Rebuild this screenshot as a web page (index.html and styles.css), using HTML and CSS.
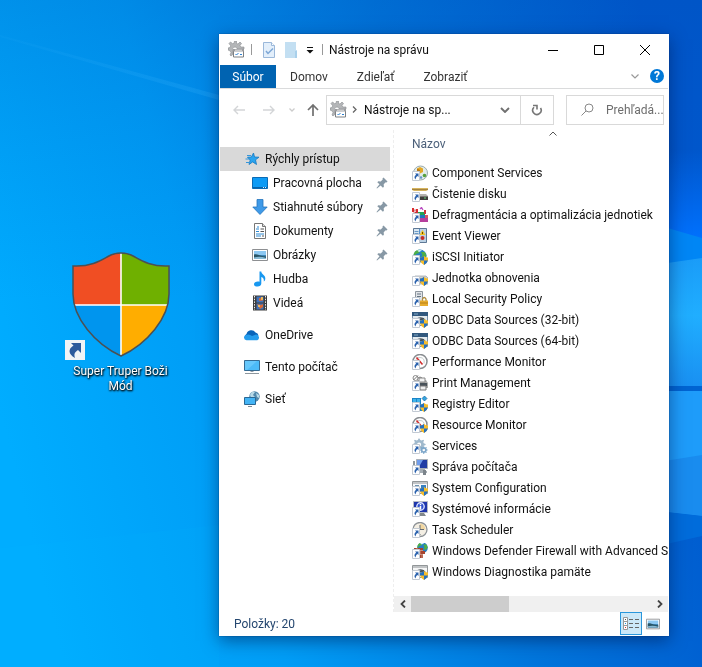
FILE: index.html
```html
<!DOCTYPE html>
<html lang="sk">
<head>
<meta charset="utf-8">
<meta name="viewport" content="width=device-width, initial-scale=1">
<title>Nástroje na správu</title>
<link rel="stylesheet" href="styles.css">
</head>
<body>
<svg class="defs" aria-hidden="true">
  <defs>
    <symbol id="sc" viewBox="0 0 16 16"><path d="M.5 6.500h7v9h-7z" fill="#fff" stroke="#c3cad3"/><path d="M3 8.500h3.500V12L5.400 11C4.200 12 3.700 13 3.700 14.500 1.800 13 2.200 11 4.200 9.800z" fill="#2a62ae"/></symbol>
    <symbol id="uac" viewBox="0 0 16 16"><path d="M8 8.500q2 0 4-1.500 2 1.500 4 1.500v3q-1 3-4 4.500-3-1.500-4-4.500z" fill="#f6bd2c"/><path d="M8 8.500q2 0 4-1.500v4.500H8zM12 11.500h4q-1 3-4 4.500z" fill="#2370c2"/></symbol>
    <symbol id="gear" viewBox="0 0 16 16"><path d="M8 .5l1 2 1.500.5 2.200-1 .9 1-1 2 .6 1.500 2.300.8v1.400l-2.300.8-.6 1.500 1 2-1 1-2-1-1.600.6-.8 2.200H6.800L6 13.600 4.500 13l-2.200 1-1-1 1-2-.6-1.500L0 8.700V7.300l1.700-.8.6-1.500-1-2 1-1 2.200 1L6 2.500l.8-2zM7.500 5.500a2.500 2.500 0 1 0 0 5 2.500 2.500 0 0 0 0-5z" fill-rule="evenodd"/></symbol>
    <symbol id="tools" viewBox="0 0 17 17"><path d="M6.500 0h2v2.500l1.500.5 2-2 1.500 1.500-1.500 2 .8 1.500H16v2H9V7.500a2.200 2.200 0 1 0-4 1.800v4L3 15l-1-1 1-2.500-1-1.700L0 9V7l2-.5.7-1.700L1 2.500 2.500 1l2.200 1.700L6 2.300z" fill="#b4b6b8" stroke="#8c8f92" stroke-width=".6"/><path d="M5.500 8.500h10v7.500h-10z" fill="#fff" stroke="#7d8083"/><path d="M5 8h11v2.500H5z" fill="#9b9da0"/><path d="M7 9.200h7" stroke="#e4e4e4"/><path d="M7.500 13l1 1 2-2M12 13.500h2" fill="none" stroke="#2b7fd0"/></symbol>
    <symbol id="star" viewBox="0 0 16 16"><path d="M9.500 2l1 4 4.500.2-3.500 2.600 1 4.700-3.800-2.600L5 13.500l1.200-4.500L3.500 6.200l3.900-.2z" fill="#2aa4ef" stroke="#1477c0" stroke-width=".8"/><path d="M3 4.500h4M1.500 8h4M2 11.500h4" stroke="#3596da"/></symbol>
    <symbol id="desk" viewBox="0 0 16 16"><path d="M.5 2.500h15v11H.5z" fill="#0d9bf5" stroke="#0a6bb5"/><path d="M1 12h14v1H1z" fill="#0863a8"/><path d="M11 12.500h1M13 12.500h1" stroke="#d8efff"/></symbol>
    <symbol id="down" viewBox="0 0 16 16"><path d="M5 .5h6V8h4.200L8 15.500.8 8H5z" fill="#3f9ae8" stroke="#2374bd" stroke-width=".8"/></symbol>
    <symbol id="doc" viewBox="0 0 16 16"><path d="M2.500.5h8l3 3v12h-11z" fill="#fff" stroke="#777"/><path d="M10.500.5v3h3" fill="#ddd" stroke="#777"/><path d="M4 6h3M5 4h2M4 8.500h3M4 11h8M4 13h5" stroke="#2e8ad2"/><path d="M8.500 6h3.500M8.500 8.500H12M10 13h2" stroke="#555"/></symbol>
    <symbol id="pic" viewBox="0 0 16 16"><path d="M.5 2.500h15v11H.5z" fill="#fff" stroke="#8d8f92"/><path d="M2 4h12v4H2z" fill="#8cc8f2"/><path d="M2 8h12v4H2z" fill="#3e86b8"/><path d="M2 7.500c4-1 4 1.500 12 2V12H2z" fill="#285567"/><path d="M2 10.500q6-1.500 12 .5v1H2z" fill="#87bad5"/></symbol>
    <symbol id="music" viewBox="0 0 16 16"><path d="M7.500.5h1.800c0 3 4 3.500 4 7 0 1.500-.7 2.500-1.500 3 .5-2.500-.8-4-2.500-4.500v6.500c0 1.700-1.600 3-3.800 3S2 14.700 2 13.200s1.800-2.700 3.800-2.700c.7 0 1.200.1 1.700.3z" fill="#1898f0"/></symbol>
    <symbol id="video" viewBox="0 0 16 16"><path d="M1 .5h14v15H1z" fill="#3d3d3d"/><path d="M2.500 1v14M13.500 1v14" stroke="#eee" stroke-dasharray="1.500 1.200"/><path d="M4.500 1.500h7v6h-7zM4.500 8.500h7v6h-7z" fill="#4073ba"/><path d="M7 3l4 .5v2L7 6zM5 9l4 1 2-1v3l-3 2z" fill="#d96935"/><path d="M9 2h2v3H9zM6 10h2v2H6z" fill="#efb85a"/></symbol>
    <symbol id="cloud" viewBox="0 0 16 16"><path d="M2 12a3 3 0 0 1 .5-5 5 5 0 0 1 9-1.500 4 4 0 0 1 3 3L8 12z" fill="#0864b9"/><path d="M2.500 13.300A2.700 2.700 0 0 1 2 8q3-1.500 6 1l4-1.400a3 3 0 0 1 1.300 5.700z" fill="#249cec"/></symbol>
    <symbol id="pc" viewBox="0 0 16 16"><path d="M.5 1.500h15v10H.5z" fill="#4cbbf8" stroke="#356b93"/><path d="M1 2h12L3 11H1z" fill="#78d0ff" opacity=".6"/><path d="M6.500 12h3v1h-3z" fill="#929ca5"/><path d="M1 14.500h14" stroke="#8d979e"/></symbol>
    <symbol id="net" viewBox="0 0 16 16"><circle cx="10.500" cy="5.500" r="5.200" fill="#5289ac"/><path d="M7 2q2-2 4-1L9 4l2 2-1 3q-3-1-4-5zM12 2l3 2v3l-2-1z" fill="#b8d9e7"/><path d="M.5 6.500h11v7H.5z" fill="#43b4f5" stroke="#2a6895"/><path d="M4 15.500h4" stroke="#7e8c95"/></symbol>
    <symbol id="pin" viewBox="0 0 12 12"><path d="M7.500.5l4 4-1 1-.8-.2-2 2 .2 2.400-1 1-2.300-2.300L1 11.500l-.5-.5 3-3.700L1.300 5.200l1-1 2.400.2 2-2-.2-.9z" fill="#8798a5"/></symbol>

    <symbol id="f-com" viewBox="0 0 16 16"><circle cx="8.500" cy="8" r="7" fill="#e3ebea" stroke="#9aabab"/><path d="M5 3.500L8 2l3 1.500v3.500L8 8.500 5 7z" fill="#e3a826"/><path d="M5 3.500l3 1.500v3.500L5 7z" fill="#b9790f"/><circle cx="12.500" cy="10.500" r="1.800" fill="#56a03c"/><circle cx="9" cy="12.500" r="1.300" fill="#6297c9"/></symbol>
    <symbol id="f-clean" viewBox="0 0 16 16"><path d="M0 2h16v2l-2 1H2L0 4z" fill="#d6b45e"/><path d="M0 3.500h16" stroke="#a58440"/><path d="M4 8h10l2 2v4H4z" fill="#b4b2ae"/><path d="M7 10.500h9V14H7z" fill="#403e3b"/><path d="M12 12h2" stroke="#66d27a"/></symbol>
    <symbol id="f-defrag" viewBox="0 0 16 16"><path d="M0 1h2v4H0zM4 2h2v4H4z" fill="#db2e30"/><path d="M2 3h2v3H2z" fill="#fff" stroke="#c12a35" stroke-width=".6"/><path d="M8 2l1.500-1.500L11 3" fill="none" stroke="#b94ac0" stroke-width="1.300"/><path d="M6 5h7v3H6z" fill="#22a354"/><path d="M12 3h2v4h-2zM3 5h3v2H3z" fill="#ca3438"/><path d="M8 8h7v3H8z" fill="#1d76be"/><path d="M7 11h9v4H7z" fill="#b53f9b"/><path d="M13 8h3v3h-3z" fill="#d95363"/></symbol>
    <symbol id="f-event" viewBox="0 0 16 16"><path d="M1.500.5h13v14h-13z" fill="#5991c9" stroke="#5e7895"/><path d="M2 1h5v13H2z" fill="#d9e7f1"/><path d="M2.500 3.500h4M2.500 5.500h4" stroke="#6a9ac6"/><path d="M8 1h6v13H8z" fill="#bcd2e5"/><path d="M10.500 2l3 5h-6z" fill="#f4c524"/><path d="M10.500 4v2" stroke="#714c00"/><circle cx="10.500" cy="10" r="2" fill="#c63028"/></symbol>
    <symbol id="globe" viewBox="0 0 16 16"><circle cx="8" cy="7" r="6.500" fill="#267fc4"/><path d="M3 2.500Q6 0 8 1l-1 3-3 1-2 3Q1 5 3 2.500zM9 3l4 0 1.500 4-3 3-2-2 1-2z" fill="#4faf46"/><path d="M5 1.500q3-1 5 0L7 3z" fill="#d8f4ff"/></symbol>
    <symbol id="f-drive" viewBox="0 0 16 16"><path d="M1 8l2-2h11l2 2v6H1z" fill="#ccd0d4" stroke="#9ba0a4" stroke-width=".7"/><path d="M6 9h9v4H6z" fill="#7c838a"/></symbol>
    <symbol id="f-lock" viewBox="0 0 16 16"><path d="M3.500.5h7v14h-7z" fill="#e1e4e7" stroke="#8d959d"/><path d="M5 3h4M5 5.500h4" stroke="#647382"/><path d="M10.500 10V8q1.700-3 3.500 0v2" fill="none" stroke="#b08b3b" stroke-width="1.300"/><path d="M8 9.500h8V15H8z" fill="#e7ac2e"/><path d="M8 12h8" stroke="#b77e16"/></symbol>
    <symbol id="f-odbc" viewBox="0 0 16 16"><path d="M.5.500h15v13H.5z" fill="#e4ebef" stroke="#7690a8"/><path d="M0 0h16v4H0z" fill="#31587e"/><path d="M2 2h4" stroke="#85aac7"/><path d="M4 8q4.500-4 9 0M7 8l5-1" fill="none" stroke="#4a5358" stroke-width="1.500"/></symbol>
    <symbol id="f-perf" viewBox="0 0 16 16"><circle cx="8" cy="7.500" r="7" fill="#fff" stroke="#898d91" stroke-width="1.500"/><path d="M4 9Q3 3 8 3.500q5 0 4 6" fill="none" stroke="#c6cccd"/><path d="M4.500 3.500l6 7" stroke="#d02d2d" stroke-width="1.600"/></symbol>
    <symbol id="f-print" viewBox="0 0 16 16"><circle cx="3.500" cy="3" r="2.500" fill="#fff" stroke="#888"/><path d="M1.500 5L6 .5M6 3l2-1 2 1 2 2" fill="none" stroke="#777"/><path d="M5 5h9l2 3v5H5z" fill="#ababa9"/><path d="M7 3h6v4H7z" fill="#f4f4f4" stroke="#888"/><path d="M8 8h7v3H8z" fill="#485159"/><path d="M8 11h6v4H8z" fill="#eee" stroke="#777"/></symbol>
    <symbol id="f-reg" viewBox="0 0 16 16"><path d="M0 2h9v7h5v6H3V8H0z" fill="#1b85c8"/><path d="M1 3h3v3H1zM5 3h3v3H5zM5 7h3v3H5z" fill="#40b3e9"/><path d="M12.500 0l2.500 2.500-2.500 2.500L10 2.500z" fill="#35a5e1" stroke="#17669c" stroke-width=".7"/></symbol>
    <symbol id="f-serv" viewBox="0 0 16 16"><use href="#gear" width="13" height="13" x="1" fill="#a0b9cc"/><use href="#gear" x="8" y="8" width="8" height="8" fill="#7da7ca"/></symbol>
    <symbol id="f-comp" viewBox="0 0 16 16"><path d="M4.500.5h11v9h-11z" fill="#203da5" stroke="#a8b0b8"/><path d="M5 1h6L8 6H5z" fill="#6f9cec"/><path d="M8 10h5v2h2v2H7z" fill="#a5adb4"/><path d="M1 2h2v5H1z" fill="#8e979e"/><path d="M11 11h3v5h-3z" fill="#7c848b"/></symbol>
    <symbol id="f-conf" viewBox="0 0 16 16"><path d="M.5 1.500h15v12H.5z" fill="#f8f9fa" stroke="#929698"/><path d="M1 3h14" stroke="#8b9094"/><path d="M3 5.500h4M3 7.500h3" stroke="#6f92ae"/><path d="M9 5h5v4H9z" fill="#377fc0"/></symbol>
    <symbol id="f-info" viewBox="0 0 16 16"><path d="M1.500.5h14v11h-14z" fill="#1e35ab" stroke="#b7bbc5"/><circle cx="8.500" cy="5.500" r="3.700" fill="#2f51cc" stroke="#dbe3ff" stroke-width="1.400"/><path d="M8.500 3v1.200M8.500 5v3.500" stroke="#fff" stroke-width="1.500"/><path d="M8 12h4l2 3H8z" fill="#81878b"/></symbol>
    <symbol id="f-task" viewBox="0 0 16 16"><circle cx="8" cy="7.500" r="7" fill="#f4efe4" stroke="#8d9296" stroke-width="1.300"/><path d="M8 1.500a6 6 0 0 1 5.500 6H8z" fill="#f1d6a0"/><path d="M8 3v4.500h4M3 7.500h1M8 12v1" fill="none" stroke="#646c75"/></symbol>
    <symbol id="f-fire" viewBox="0 0 16 16"><use href="#globe" x="4" y="-1" width="13" height="13"/><path d="M2 5h9v3h2v3h-2v4H2z" fill="#a6432e"/><path d="M2 7.500h9M5 11.500h6M5 5v2M8 8v3M10 12v3" stroke="#deb1a0" stroke-width=".7"/></symbol>
    <symbol id="f-mem" viewBox="0 0 16 16"><path d="M.5 1.500h15v12H.5z" fill="#f6f7f7" stroke="#929698"/><path d="M1 3h14" stroke="#8b9094"/><path d="M4 8q4.500-4 9 0M7 8l5-1" fill="none" stroke="#4a5358" stroke-width="1.500"/></symbol>
    <linearGradient id="sky" x1="0" y1=".62" x2="1" y2=".38"><stop offset="0" stop-color="#00adff"/><stop offset=".3" stop-color="#009df6"/><stop offset=".65" stop-color="#0074db"/><stop offset="1" stop-color="#0055cc"/></linearGradient>
    <linearGradient id="shade" x1="0" y1="0" x2="0" y2="1"><stop offset="0" stop-color="#0055b8" stop-opacity=".25"/><stop offset=".45" stop-color="#0068d0" stop-opacity="0"/></linearGradient>
    <linearGradient id="ray" x1="0" y1="0" x2="1" y2="0"><stop offset="0" stop-color="#44baff" stop-opacity=".05"/><stop offset="1" stop-color="#44baff" stop-opacity=".2"/></linearGradient>
    <linearGradient id="pane" x1="0" y1="0" x2="0" y2="1"><stop offset="0" stop-color="#1a9cf8"/><stop offset=".45" stop-color="#20aeff"/><stop offset="1" stop-color="#1990f2"/></linearGradient>
    <linearGradient id="glow" x1="0" y1="0" x2="0" y2="1"><stop offset="0" stop-color="#0072ff" stop-opacity="0"/><stop offset="1" stop-color="#0072ff"/></linearGradient>
    <clipPath id="shieldclip"><path d="M1 14C18 15 28 9 35 5 40 2 44 1 49 1s9 1 14 4c7 4 17 10 34 9v28c0 24-22 50-48 62C23 92 1 66 1 42z"/></clipPath>
  </defs>
</svg>

<svg class="wallpaper" viewBox="0 0 702 667" preserveAspectRatio="none" aria-hidden="true">
  <path d="M0 0h702v667H0z" fill="url(#sky)"/>
  <path d="M0 0h702v667H0z" fill="url(#shade)"/>
  <path d="M0 35L219 95v5L0 37z" fill="url(#ray)"/>
  <path d="M0 548L219 525v142H0z" fill="#00b4ff" opacity=".12"/>
  <path d="M640 150h62v92l-62-20z" fill="url(#glow)"/>
  <path d="M640 220l62 18v25l-62 6z" fill="#0086f5"/>
  <path d="M640 267l62-9v128h-62z" fill="url(#pane)"/>
  <path d="M640 386h62v5h-62z" fill="#0064d2"/>
  <path d="M640 391h62v125l-62-7z" fill="#1e9cfa"/>
  <path d="M640 465l62-10v61l-62-7z" fill="#198cef"/>
  <path d="M640 509l62 7v20l-62 14z" fill="#006cdb"/>
</svg>

<main class="desktop">
  <a class="shortcut" href="#">
    <svg class="shield" viewBox="0 0 98 105" aria-hidden="true">
      <g clip-path="url(#shieldclip)"><path d="M0 0h49v53H0z" fill="#f04e23"/><path d="M49 0h49v53H49z" fill="#6fb000"/><path d="M0 53h49v52H0z" fill="#0095ee"/><path d="M49 53h49v52H49z" fill="#ffad00"/><path d="M49 0v105M0 53h98" stroke="#fff" stroke-width="1.600"/></g>
      <path d="M1 14C18 15 28 9 35 5 40 2 44 1 49 1s9 1 14 4c7 4 17 10 34 9v28c0 24-22 50-48 62C23 92 1 66 1 42z" fill="none" stroke="#4b5054" stroke-width="1.500"/>
    </svg>
    <svg class="overlay" viewBox="0 0 20 20" aria-hidden="true"><path d="M0 0h20v20H0z" fill="#f1f3f6"/><path d="M6 3h10v10l-3-3c-4 3-4 4-3 8-7-4-7-9-1.500-12.500z" fill="#2c5a9c"/></svg>
    <span>Super Truper Boži Mód</span>
  </a>

  <section class="window" aria-label="Nástroje na správu">
    <header class="titlebar">
      <svg class="i17" viewBox="0 0 17 17"><use href="#tools"/></svg>
      <i class="sep"></i>
      <button class="quick" aria-label="Vlastnosti"><svg viewBox="0 0 14 16"><path d="M1.500.5h8l3 3v12h-11z" fill="#e3effb" stroke="#9bb8da"/><path d="M9.500.5v3h3" fill="#fff" stroke="#9bb8da"/><path d="M4 9l2 2.500 5-5" fill="none" stroke="#7ea7d6" stroke-width="1.500"/></svg></button>
      <button class="quick" aria-label="Nový priečinok"><svg viewBox="0 0 14 16"><path d="M1 0h11v8h1v8H1z" fill="#c3dff2"/><path d="M11 9h2v7h-2z" fill="#a9d0eb"/></svg></button>
      <button class="custom" aria-label="Prispôsobiť"><svg viewBox="0 0 8 8"><path d="M1 1.500h6" stroke="#111"/><path d="M.5 4h7L4 7.500z" fill="#111"/></svg></button>
      <i class="sep"></i>
      <h1>Nástroje na správu</h1>
      <div class="controls">
        <button aria-label="Minimalizovať"><svg viewBox="0 0 10 10"><path d="M0 5.500h10" stroke="#000"/></svg></button>
        <button aria-label="Maximalizovať"><svg viewBox="0 0 10 10"><path d="M.5.500h9v9h-9z" fill="none" stroke="#000"/></svg></button>
        <button aria-label="Zavrieť"><svg viewBox="0 0 10 10"><path d="M0 0l10 10M10 0L0 10" stroke="#000"/></svg></button>
      </div>
    </header>

    <nav class="ribbon">
      <button class="file">Súbor</button>
      <button>Domov</button>
      <button>Zdieľať</button>
      <button>Zobraziť</button>
      <button class="expand" aria-label="Rozbaliť"><svg viewBox="0 0 8 5"><path d="M.5.500L4 4 7.500.5" fill="none" stroke="#999" stroke-width="1.200"/></svg></button>
      <button class="help" aria-label="Pomocník">?</button>
    </nav>

    <div class="navbar">
      <button class="arrow" aria-label="Späť"><svg viewBox="0 0 12 10"><path d="M12 5H1M5 1L1 5l4 4" fill="none" stroke="#d3d5d7" stroke-width="1.400"/></svg></button>
      <button class="arrow" aria-label="Dopredu"><svg viewBox="0 0 12 10"><path d="M0 5h11M7 1l4 4-4 4" fill="none" stroke="#d3d5d7" stroke-width="1.400"/></svg></button>
      <button class="recent" aria-label="Posledné"><svg viewBox="0 0 6 4"><path d="M.5.500L3 3 5.500.5" fill="none" stroke="#ccc" stroke-width="1.300"/></svg></button>
      <button class="up" aria-label="Nahor"><svg viewBox="0 0 12 12"><path d="M6 12V1M1 6l5-5 5 5" fill="none" stroke="#707070" stroke-width="1.700"/></svg></button>
      <div class="address">
        <svg class="i17" viewBox="0 0 17 17"><use href="#tools"/></svg>
        <svg class="crumb" viewBox="0 0 5 7"><path d="M1 .5l3 3-3 3" fill="none" stroke="#666" stroke-width="1.300"/></svg>
        <span>Nástroje na sp...</span>
        <button class="drop" aria-label="Predchádzajúce umiestnenia"><svg viewBox="0 0 10 6"><path d="M1 1l4 4 4-4" fill="none" stroke="#707070" stroke-width="1.900"/></svg></button>
        <button class="refresh" aria-label="Obnoviť"><svg viewBox="0 0 12 12"><path d="M3 3.200A4.200 4.200 0 1 0 9.500 4" fill="none" stroke="#777" stroke-width="1.600"/><path d="M2 1.500h4v4" fill="none" stroke="#777" stroke-width="1.600"/></svg></button>
      </div>
      <label class="search">
        <svg viewBox="0 0 13 13"><circle cx="8" cy="5" r="4" fill="none" stroke="#888"/><path d="M5 8l-4.500 4.500" stroke="#888"/></svg>
        <input type="text" placeholder="Prehľadá..." aria-label="Prehľadávať">
      </label>
    </div>

    <div class="content">
      <nav class="tree">
        <a class="root on" href="#"><svg class="i16" viewBox="0 0 16 16"><use href="#star"/></svg>Rýchly prístup</a>
        <a href="#"><svg class="i16" viewBox="0 0 16 16"><use href="#desk"/></svg>Pracovná plocha<svg class="pin"><use href="#pin"/></svg></a>
        <a href="#"><svg class="i16" viewBox="0 0 16 16"><use href="#down"/></svg>Stiahnuté súbory<svg class="pin"><use href="#pin"/></svg></a>
        <a href="#"><svg class="i16" viewBox="0 0 16 16"><use href="#doc"/></svg>Dokumenty<svg class="pin"><use href="#pin"/></svg></a>
        <a href="#"><svg class="i16" viewBox="0 0 16 16"><use href="#pic"/></svg>Obrázky<svg class="pin"><use href="#pin"/></svg></a>
        <a href="#"><svg class="i16" viewBox="0 0 16 16"><use href="#music"/></svg>Hudba</a>
        <a href="#"><svg class="i16" viewBox="0 0 16 16"><use href="#video"/></svg>Videá</a>
        <a class="root gap" href="#"><svg class="i16" viewBox="0 0 16 16"><use href="#cloud"/></svg>OneDrive</a>
        <a class="root gap" href="#"><svg class="i16" viewBox="0 0 16 16"><use href="#pc"/></svg>Tento počítač</a>
        <a class="root gap" href="#"><svg class="i16" viewBox="0 0 16 16"><use href="#net"/></svg>Sieť</a>
      </nav>

      <div class="files">
        <div class="view">
          <svg class="sort" viewBox="0 0 8 5"><path d="M.5 4.500L4 1l3.500 3.500" fill="none" stroke="#555"/></svg>
          <table>
            <thead><tr><th scope="col">Názov</th></tr></thead>
            <tbody>
              <tr><td><svg class="i16"><use href="#f-com"/><use href="#sc"/></svg>Component Services</td></tr>
              <tr><td><svg class="i16"><use href="#f-clean"/><use href="#sc"/></svg>Čistenie disku</td></tr>
              <tr><td><svg class="i16"><use href="#f-defrag"/><use href="#sc"/></svg>Defragmentácia a optimalizácia jednotiek</td></tr>
              <tr><td><svg class="i16"><use href="#f-event"/><use href="#sc"/></svg>Event Viewer</td></tr>
              <tr><td><svg class="i16"><use href="#globe"/><use href="#sc"/><use href="#uac"/></svg>iSCSI Initiator</td></tr>
              <tr><td><svg class="i16"><use href="#f-drive"/><use href="#sc"/><use href="#uac"/></svg>Jednotka obnovenia</td></tr>
              <tr><td><svg class="i16"><use href="#f-lock"/><use href="#sc"/></svg>Local Security Policy</td></tr>
              <tr><td><svg class="i16"><use href="#f-odbc"/><use href="#sc"/><use href="#uac"/></svg>ODBC Data Sources (32-bit)</td></tr>
              <tr><td><svg class="i16"><use href="#f-odbc"/><use href="#sc"/><use href="#uac"/></svg>ODBC Data Sources (64-bit)</td></tr>
              <tr><td><svg class="i16"><use href="#f-perf"/><use href="#sc"/></svg>Performance Monitor</td></tr>
              <tr><td><svg class="i16"><use href="#f-print"/><use href="#sc"/></svg>Print Management</td></tr>
              <tr><td><svg class="i16"><use href="#f-reg"/><use href="#sc"/><use href="#uac"/></svg>Registry Editor</td></tr>
              <tr><td><svg class="i16"><use href="#f-perf"/><use href="#sc"/><use href="#uac"/></svg>Resource Monitor</td></tr>
              <tr><td><svg class="i16"><use href="#f-serv"/><use href="#sc"/></svg>Services</td></tr>
              <tr><td><svg class="i16"><use href="#f-comp"/><use href="#sc"/></svg>Správa počítača</td></tr>
              <tr><td><svg class="i16"><use href="#f-conf"/><use href="#sc"/><use href="#uac"/></svg>System Configuration</td></tr>
              <tr><td><svg class="i16"><use href="#f-info"/><use href="#sc"/></svg>Systémové informácie</td></tr>
              <tr><td><svg class="i16"><use href="#f-task"/><use href="#sc"/></svg>Task Scheduler</td></tr>
              <tr><td><svg class="i16"><use href="#f-fire"/><use href="#sc"/></svg>Windows Defender Firewall with Advanced Security</td></tr>
              <tr><td><svg class="i16"><use href="#f-mem"/><use href="#sc"/><use href="#uac"/></svg>Windows Diagnostika pamäte</td></tr>
            </tbody>
          </table>
        </div>
        <div class="scroll">
          <button aria-label="Doľava"><svg viewBox="0 0 6 8"><path d="M5 .5L1.500 4 5 7.500" fill="none" stroke="#444" stroke-width="1.800"/></svg></button>
          <div class="track"><div class="thumb"></div></div>
          <button aria-label="Doprava"><svg viewBox="0 0 6 8"><path d="M1 .5L4.500 4 1 7.500" fill="none" stroke="#444" stroke-width="1.800"/></svg></button>
        </div>
      </div>
    </div>

    <footer class="status">
      <span>Položky: 20</span>
      <button class="mode on" aria-label="Podrobnosti"><svg viewBox="0 0 18 14"><path d="M1.500.5h4v12h-4zM1.500 4.500h4M1.500 8.500h4" fill="#fff" stroke="#999"/><path d="M3 2.500h1" stroke="#555"/><path d="M3 6.500h1" stroke="#2194e0"/><path d="M3 10.500h1" stroke="#d33"/><path d="M7 2.500h4M13 2.500h4M7 6.500h4M13 6.500h4M7 10.500h4M13 10.500h4" stroke="#666"/></svg></button>
      <button class="mode" aria-label="Veľké ikony"><svg class="i16" viewBox="0 0 16 16"><use href="#pic"/></svg></button>
    </footer>
  </section>
</main>
</body>
</html>
```
FILE: styles.css
```css
* { box-sizing: border-box; }

body {
  margin: 0;
  min-height: 100vh;
  overflow: hidden;
  font: 12px/16px Roboto, "Noto Sans", sans-serif;
  color: #111;
  background: #0091ea;
}

button {
  display: flex;
  align-items: center;
  justify-content: center;
  padding: 0;
  border: 0;
  background: none;
  font: inherit;
  color: inherit;
}

a { color: inherit; text-decoration: none; }
svg { display: block; flex: none; }

.defs { position: absolute; width: 0; height: 0; }
.i16 { width: 16px; height: 16px; }
.i17 { width: 17px; height: 17px; }

.wallpaper { position: fixed; inset: 0; width: 100%; height: 100%; }
.desktop { position: relative; height: 100vh; }

.shortcut {
  position: absolute;
  left: 65px;
  top: 252px;
  width: 111px;
  display: flex;
  flex-direction: column;
  align-items: center;
  gap: 7px;
  line-height: 15px;
  text-align: center;
  color: #fff;
  text-shadow: 0 1px 2px #000, 1px 1px 2px #000;
}
.shield { width: 98px; height: 105px; }
.overlay { position: absolute; left: 0; top: 88px; width: 20px; height: 20px; }

.window {
  position: absolute;
  inset: 34px 33px 31px 219px;
  display: flex;
  flex-direction: column;
  padding: 0 1px;
  background: #fff;
  box-shadow: 0 5px 16px rgba(0, 20, 70, .5), 0 0 1px rgba(0, 30, 80, .8);
}

.titlebar { display: flex; align-items: center; height: 31px; padding-left: 8px; }
.sep { width: 1px; height: 11px; margin: 0 6px; background: #999; }
.quick { width: 14px; margin-right: 8px; }
.quick:first-of-type { margin-left: 4px; }
.quick svg { width: 14px; height: 16px; }
.custom svg { width: 8px; height: 8px; }
.custom { margin-right: 2px; }
h1 { margin: 0; font-size: 12px; font-weight: 400; white-space: nowrap; }
.controls { display: flex; height: 100%; margin-left: auto; }
.controls button { width: 46px; }
.controls svg { width: 10px; height: 10px; }

.ribbon { display: flex; height: 24px; border-bottom: 1px solid #dadbdc; color: #333; }
.ribbon button { margin-left: 29px; }
.ribbon .file { width: 56px; margin: 0 -15px 0 0; background: #0063b1; color: #fff; }
.ribbon .expand { margin-left: auto; }
.expand svg { width: 8px; height: 5px; }
.ribbon .help {
  width: 14px;
  height: 14px;
  margin: 4px 4px 0 11px;
  border-radius: 50%;
  background: #0078d7;
  color: #fff;
  font-weight: 700;
}

.navbar { display: flex; align-items: center; height: 41px; padding: 0 4px 0 13px; }
.arrow { margin-right: 18px; }
.arrow svg { width: 12px; height: 10px; }
.arrow + .recent { margin-left: -4px; }
.recent svg { width: 6px; height: 4px; }
.up { margin: 0 7px 0 12px; }
.up svg { width: 12px; height: 12px; }
.address {
  display: flex;
  flex: 1;
  align-items: center;
  height: 30px;
  padding-left: 3px;
  border: 1px solid #d9d9d9;
  white-space: nowrap;
}
.crumb { width: 5px; height: 7px; margin: 0 7px 0 5px; }
.drop { margin-left: auto; margin-right: 10px; }
.drop svg { width: 10px; height: 6px; }
.refresh { width: 33px; height: 100%; border-left: 1px solid #d9d9d9; }
.refresh svg { width: 12px; height: 12px; }
.search {
  display: flex;
  align-items: center;
  width: 98px;
  height: 30px;
  margin-left: 12px;
  padding-left: 14px;
  border: 1px solid #d9d9d9;
}
.search svg { width: 13px; height: 13px; margin-right: 12px; }
.search input { flex: 1; min-width: 0; padding: 0; border: 0; font: inherit; }
.search input::placeholder { color: #6d6d6d; opacity: 1; }

.content { display: flex; flex: 1; min-height: 0; }
.tree { width: 174px; padding: 17px 3px 0 0; border-right: 1px dashed #eee; }
.tree a { display: flex; align-items: center; gap: 5px; height: 24px; padding: 0 2px 0 32px; white-space: nowrap; }
.tree .root { padding-left: 24px; }
.tree .on { background: #d9d9d9; }
.tree .gap { margin-top: 8px; }
.tree .pin { width: 12px; height: 12px; margin-left: auto; }

.files { display: flex; flex: 1; flex-direction: column; min-width: 0; }
.view { position: relative; flex: 1; min-height: 0; overflow: hidden; padding-left: 18px; }
.sort { position: absolute; left: 155px; top: 1px; width: 8px; height: 5px; }
table { border-collapse: collapse; white-space: nowrap; }
th { height: 32px; padding: 0 0 5px; font-weight: 400; text-align: left; color: #4c607a; }
td { height: 21px; padding: 0 0 0 20px; }
td .i16 { float: left; margin-left: -20px; }
.scroll { display: flex; height: 16px; background: #f0f0f0; }
.scroll button { width: 17px; }
.scroll svg { width: 6px; height: 8px; }
.track { flex: 1; }
.thumb { width: 41%; height: 100%; background: #cdcdcd; }

.status { display: flex; height: 24px; padding: 0 4px 1px 14px; color: #24466f; }
.status span { margin: 4px auto 0 0; }
.mode { align-self: flex-start; width: 22px; height: 23px; }
.mode.on { border: 1px solid #2a97dc; background: #cce8f8; }
.mode svg { width: 18px; height: 14px; }
.mode .i16 { width: 14px; height: 14px; }
```
